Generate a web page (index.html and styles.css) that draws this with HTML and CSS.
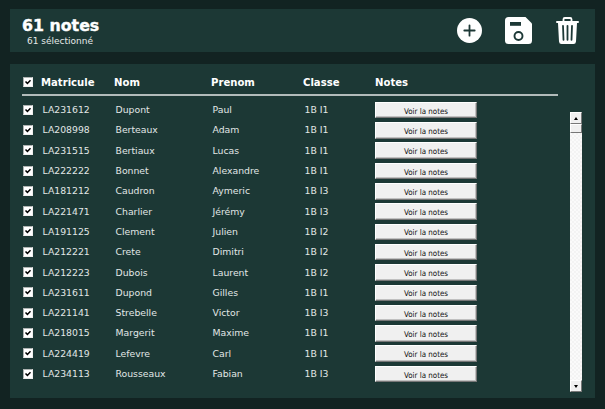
FILE: index.html
```html
<!DOCTYPE html>
<html lang="fr">
<head>
<meta charset="utf-8">
<title>Notes</title>
<link rel="stylesheet" href="styles.css">
</head>
<body>
<header class="panel top">
  <div class="heading"><h1>61 notes</h1><p>61 sélectionné</p></div>
  <div class="actions">
    <svg class="add" viewBox="0 0 25 25"><circle cx="12.5" cy="12.5" r="12.5" fill="#fff"/><path d="M12.5 7.3v10.4M7.3 12.5h10.4" stroke="#1d3836" stroke-width="1.8" stroke-linecap="round"/></svg>
    <svg class="save" viewBox="0 0 27 27"><path fill="#fff" d="M3.5 0H20.5L27 6.5V23.5Q27 27 23.5 27H3.5Q0 27 0 23.5V3.5Q0 0 3.5 0Z"/><path fill="#1d3836" d="M5 5h11v3.8H5z"/><circle cx="13.5" cy="19" r="4" fill="none" stroke="#1d3836" stroke-width="1.9"/></svg>
    <svg class="trash" viewBox="0 0 23 27"><path fill="none" stroke="#fff" stroke-width="1.8" d="M7.5 5V2.3Q7.500 1 8.800 1h5.400q1.300 0 1.300 1.300V5"/><path fill="#fff" d="M1 4h21q1 0 1 1t-1 1H1Q0 6 0 5t1-1ZM2 6h19l-1 18.500Q19.800 27 17.500 27h-12Q3.200 27 3 24.500Z"/><path fill="none" stroke="#1d3836" stroke-width="1.800" stroke-linecap="round" d="M7 8.800l.5 14M11.500 8.800v14M16 8.800l-.5 14"/></svg>
  </div>
</header>
<main class="panel list">
  <div class="table">
    <div class="row head"><span class="check"><svg viewBox="0 0 8 8"><path d="M1.500 3.500l1.900 1.900L6.500 2.200"/></svg></span><b>Matricule</b><b>Nom</b><b>Prenom</b><b>Classe</b><b>Notes</b></div>
    <div class="body" id="rows"></div>
  </div>
  <div class="scroll"><div class="cap"><i class="up"></i></div><div class="thumb"></div><div class="track"></div><div class="cap"><i class="down"></i></div></div>
</main>
<script src="script.js"></script>
</body>
</html>
```
FILE: script.js
```js
const students = [
  ["LA231612", "Dupont", "Paul", "1B I1"],
  ["LA208998", "Berteaux", "Adam", "1B I1"],
  ["LA231515", "Bertiaux", "Lucas", "1B I1"],
  ["LA222222", "Bonnet", "Alexandre", "1B I1"],
  ["LA181212", "Caudron", "Aymeric", "1B I3"],
  ["LA221471", "Charlier", "Jérémy", "1B I3"],
  ["LA191125", "Clement", "Julien", "1B I2"],
  ["LA212221", "Crete", "Dimitri", "1B I2"],
  ["LA212223", "Dubois", "Laurent", "1B I2"],
  ["LA231611", "Dupond", "Gilles", "1B I1"],
  ["LA221141", "Strebelle", "Victor", "1B I3"],
  ["LA218015", "Margerit", "Maxime", "1B I1"],
  ["LA224419", "Lefevre", "Carl", "1B I1"],
  ["LA234113", "Rousseaux", "Fabian", "1B I3"]
];
const check = document.querySelector(".check").outerHTML;
document.getElementById("rows").innerHTML = students.map(s =>
  `<div class="row">${check}${s.map(t => `<span class="cell">${t}</span>`).join("")}<button>Voir la notes</button></div>`
).join("");
```
FILE: styles.css
```css
* { box-sizing: border-box; }
body {
  margin: 0;
  padding: 9px 10.5px 11px 10px;
  height: 409px;
  display: flex;
  flex-direction: column;
  gap: 12px;
  overflow: hidden;
  background: #122322;
  color: #fff;
  font-family: "DejaVu Sans", sans-serif;
}
.panel { display: flex; background: #1c3835; }
.top { height: 43px; justify-content: space-between; padding: 0 16px 0 12px; }
h1 {
  margin: 8px 0 0;
  font: bold 15.8px/17px "DejaVu Sans", sans-serif;
  -webkit-text-stroke: 0.4px #fff;
  white-space: nowrap;
}
.heading p { margin: 0 0 0 5px; font-size: 9px; line-height: 14px; color: #e4e9e8; white-space: nowrap; }
.actions { display: flex; }
.actions svg { display: block; }
.add { width: 25px; height: 25px; margin: 9px 23px 0 0; }
.save { width: 27px; height: 27px; margin: 8px 24px 0 0; }
.trash { width: 23px; height: 27px; margin-top: 8px; }
.list { flex: 1; min-height: 0; padding-left: 12px; }
.table { width: 536px; }
.row {
  display: grid;
  grid-template-columns: 19px 73px 97px 92px 72px 102px;
  align-items: center;
  height: 20.3px;
}
.head { height: 32px; padding-top: 6px; border-bottom: 2px solid #b2bbba; font-size: 10.1px; }
.head b { line-height: 14px; padding-top: 2px; }
.body { padding-top: 4px; }
.cell { padding-left: 1.5px; font-size: 9.3px; line-height: 12px; color: #e1e7e6; white-space: nowrap; }
.check {
  width: 10px;
  height: 10px;
  margin: 0 0 1px 1px;
  background: #fff;
  border: 1px solid #aeb3b2;
  border-right-color: #eee;
  border-bottom-color: #eee;
}
.check svg { display: block; width: 8px; height: 8px; }
.check path { fill: none; stroke: #000; stroke-width: 1.5; }
button {
  width: 102px;
  height: 16.5px;
  padding: 3px 0 0;
  border: 1px solid #fff;
  border-right: 1px solid #777;
  border-bottom: 1px solid #777;
  box-shadow: inset -1px -1px #c0c0c0;
  background: #f0f0f0;
  color: #111;
  font: 7.9px/10px "DejaVu Sans Condensed", "DejaVu Sans", sans-serif;
}
.scroll { width: 12px; height: 280px; margin: 48px 0 0 12px; display: flex; flex-direction: column; }
.cap, .thumb {
  height: 12px;
  background: #f0f0f0;
  border: 1px solid #fff;
  border-right-color: #777;
  border-bottom-color: #777;
  display: grid;
  place-items: center;
}
.thumb { height: 9px; }
.track { flex: 1; background: repeating-conic-gradient(#f3f3f3 0 25%, #fafafa 0 50%) 0 0 / 4px 4px; }
.up, .down { border: 2.5px solid transparent; border-top: 0; border-bottom: 3px solid #000; }
.down { border-bottom: 0; border-top: 3px solid #000; }
```
